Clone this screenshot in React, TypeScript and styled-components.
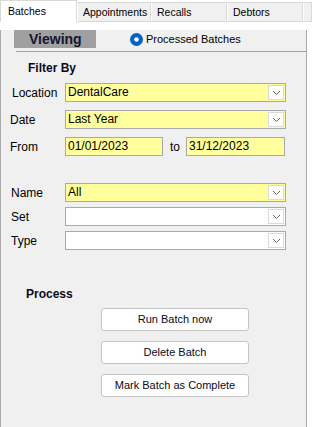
import styled, { createGlobalStyle } from 'styled-components';

const GlobalStyle = createGlobalStyle`
  html, body {
    margin: 0;
    padding: 0;
    background: #ffffff;
  }
  body {
    font-family: 'Liberation Sans', Arial, sans-serif;
    color: #000;
  }
`;

const tabs = ['Batches', 'Appointments', 'Recalls', 'Debtors'];
const tabWidths = [77, 74, 76, 76];

function Chevron() {
  return (
    <svg width="9" height="6" viewBox="0 0 9 6">
      <path d="M1 1 L4.5 4.5 L8 1" fill="none" stroke="#606060" strokeWidth="1" />
    </svg>
  );
}

type ComboProps = { value?: string; yellow?: boolean };

function Combo({ value = '', yellow }: ComboProps) {
  return (
    <ComboBox $yellow={yellow}>
      <ComboText>{value}</ComboText>
      <DropButton>
        <Chevron />
      </DropButton>
    </ComboBox>
  );
}

function App() {
  return (
    <Screen>
      <GlobalStyle />
      <TabBar>
        {tabs.map((t, i) => (
          <Tab key={t} $active={i === 0} $width={tabWidths[i]}>
            {t}
          </Tab>
        ))}
        <Tab $width={9} />
      </TabBar>
      <Panel>
        <HeaderRow>
          <ViewingBox>Viewing</ViewingBox>
          <Radio>
            <svg width="13" height="13" viewBox="0 0 13 13">
              <circle cx="6.5" cy="6.5" r="6.5" fill="#0063c8" />
              <circle cx="6.5" cy="6.5" r="2.3" fill="#ffffff" />
            </svg>
            Processed Batches
          </Radio>
        </HeaderRow>
        <Divider />

        <SectionTitle $indent={27}>Filter By</SectionTitle>
        <FieldGrid $top={8}>
          <Label $nudge={2}>Location</Label>
          <Combo value="DentalCare" yellow />
          <Label>Date</Label>
          <Combo value="Last Year" yellow />
          <Label>From</Label>
          <DateRow>
            <DateInput $width={98}>01/01/2023</DateInput>
            <ToText>to</ToText>
            <DateInput $width={99}>31/12/2023</DateInput>
          </DateRow>
        </FieldGrid>

        <FieldGrid $top={27} $gap={5}>
          <Label $nudge={1}>Name</Label>
          <Combo value="All" yellow />
          <Label $nudge={1}>Set</Label>
          <Combo />
          <Label $nudge={1}>Type</Label>
          <Combo />
        </FieldGrid>

        <SectionTitle $indent={25} $top={37}>
          Process
        </SectionTitle>
        <ButtonColumn>
          <ActionButton>Run Batch now</ActionButton>
          <ActionButton>Delete Batch</ActionButton>
          <ActionButton>Mark Batch as Complete</ActionButton>
        </ButtonColumn>
      </Panel>
    </Screen>
  );
}

const Screen = styled.div`
  width: 312px;
  height: 427px;
  overflow: hidden;
  background: #ffffff;
`;

const TabBar = styled.div`
  display: flex;
  align-items: flex-end;
  height: 22px;
`;

const Tab = styled.div<{ $active?: boolean; $width: number }>`
  box-sizing: border-box;
  width: ${p => p.$width}px;
  height: ${p => (p.$active ? 22 : 20)}px;
  padding: ${p => (p.$active ? '4px 0 0 7px' : '3px 0 0 5px')};
  font-size: 10.5px;
  line-height: 13px;
  background: ${p => (p.$active ? '#ffffff' : '#f0f0f0')};
  border: 1px solid #d9d9d9;
  border-left-color: ${p => (p.$active ? '#d9d9d9' : '#ffffff')};
  border-bottom: ${p => (p.$active ? 'none' : '1px solid #d9d9d9')};
  color: #000;
  white-space: nowrap;
  overflow: hidden;
`;

const Panel = styled.div`
  box-sizing: border-box;
  width: 307px;
  height: 404px;
  background: #f0f0f0;
  border: 1px solid #acacac;
  border-top: none;
`;

const HeaderRow = styled.div`
  display: flex;
  align-items: center;
  margin-top: 8px;
  padding-left: 13px;
  gap: 34px;
`;

const ViewingBox = styled.div`
  box-sizing: border-box;
  width: 82px;
  height: 18px;
  background: #a0a0a0;
  color: #15152e;
  font-size: 14px;
  font-weight: bold;
  line-height: 18px;
  padding-left: 15px;
`;

const Radio = styled.div`
  display: flex;
  align-items: center;
  gap: 3px;
  font-size: 11px;
  color: #000;
`;

const Divider = styled.div`
  height: 1px;
  margin: 3px 0 0 15px;
  background: #a0a0a0;
`;

const SectionTitle = styled.div<{ $indent: number; $top?: number }>`
  margin-top: ${p => p.$top ?? 9}px;
  padding-left: ${p => p.$indent}px;
  font-size: 12px;
  font-weight: bold;
  line-height: 14px;
  color: #0a0a1e;
`;

const FieldGrid = styled.div<{ $top: number; $gap?: number }>`
  display: grid;
  grid-template-columns: 55px 221px;
  row-gap: ${p => p.$gap ?? 8}px;
  align-items: center;
  margin-top: ${p => p.$top}px;
  padding-left: 9px;
`;

const Label = styled.div<{ $nudge?: number }>`
  font-size: 12px;
  padding-left: ${p => p.$nudge ?? 0}px;
  color: #000;
`;

const ComboBox = styled.div<{ $yellow?: boolean }>`
  box-sizing: border-box;
  display: flex;
  align-items: center;
  height: 19px;
  background: ${p => (p.$yellow ? '#ffff9e' : '#ffffff')};
  border: 1px solid #a9a9a9;
  padding: 0 1px 0 2px;
`;

const ComboText = styled.div`
  flex: 1;
  font-size: 12px;
  line-height: 15px;
`;

const DropButton = styled.div`
  box-sizing: border-box;
  display: flex;
  align-items: center;
  justify-content: center;
  width: 16px;
  height: 15px;
  background: #ffffff;
  border: 1px solid #dadada;
`;

const DateRow = styled.div`
  display: flex;
  align-items: center;
`;

const DateInput = styled.div<{ $width: number }>`
  box-sizing: border-box;
  width: ${p => p.$width}px;
  height: 19px;
  background: #ffff9e;
  border: 1px solid #a9a9a9;
  padding-left: 2px;
  font-size: 12px;
  line-height: 17px;
`;

const ToText = styled.div`
  width: 23px;
  box-sizing: border-box;
  padding-left: 7px;
  font-size: 12px;
`;

const ButtonColumn = styled.div`
  display: flex;
  flex-direction: column;
  gap: 10px;
  margin-top: 7px;
  padding-left: 100px;
`;

const ActionButton = styled.div`
  box-sizing: border-box;
  width: 148px;
  height: 23px;
  background: #ffffff;
  border: 1px solid #c4c4c4;
  border-radius: 3px;
  font-size: 11px;
  line-height: 21px;
  text-align: center;
  color: #0a0a1e;
`;

export default App;
